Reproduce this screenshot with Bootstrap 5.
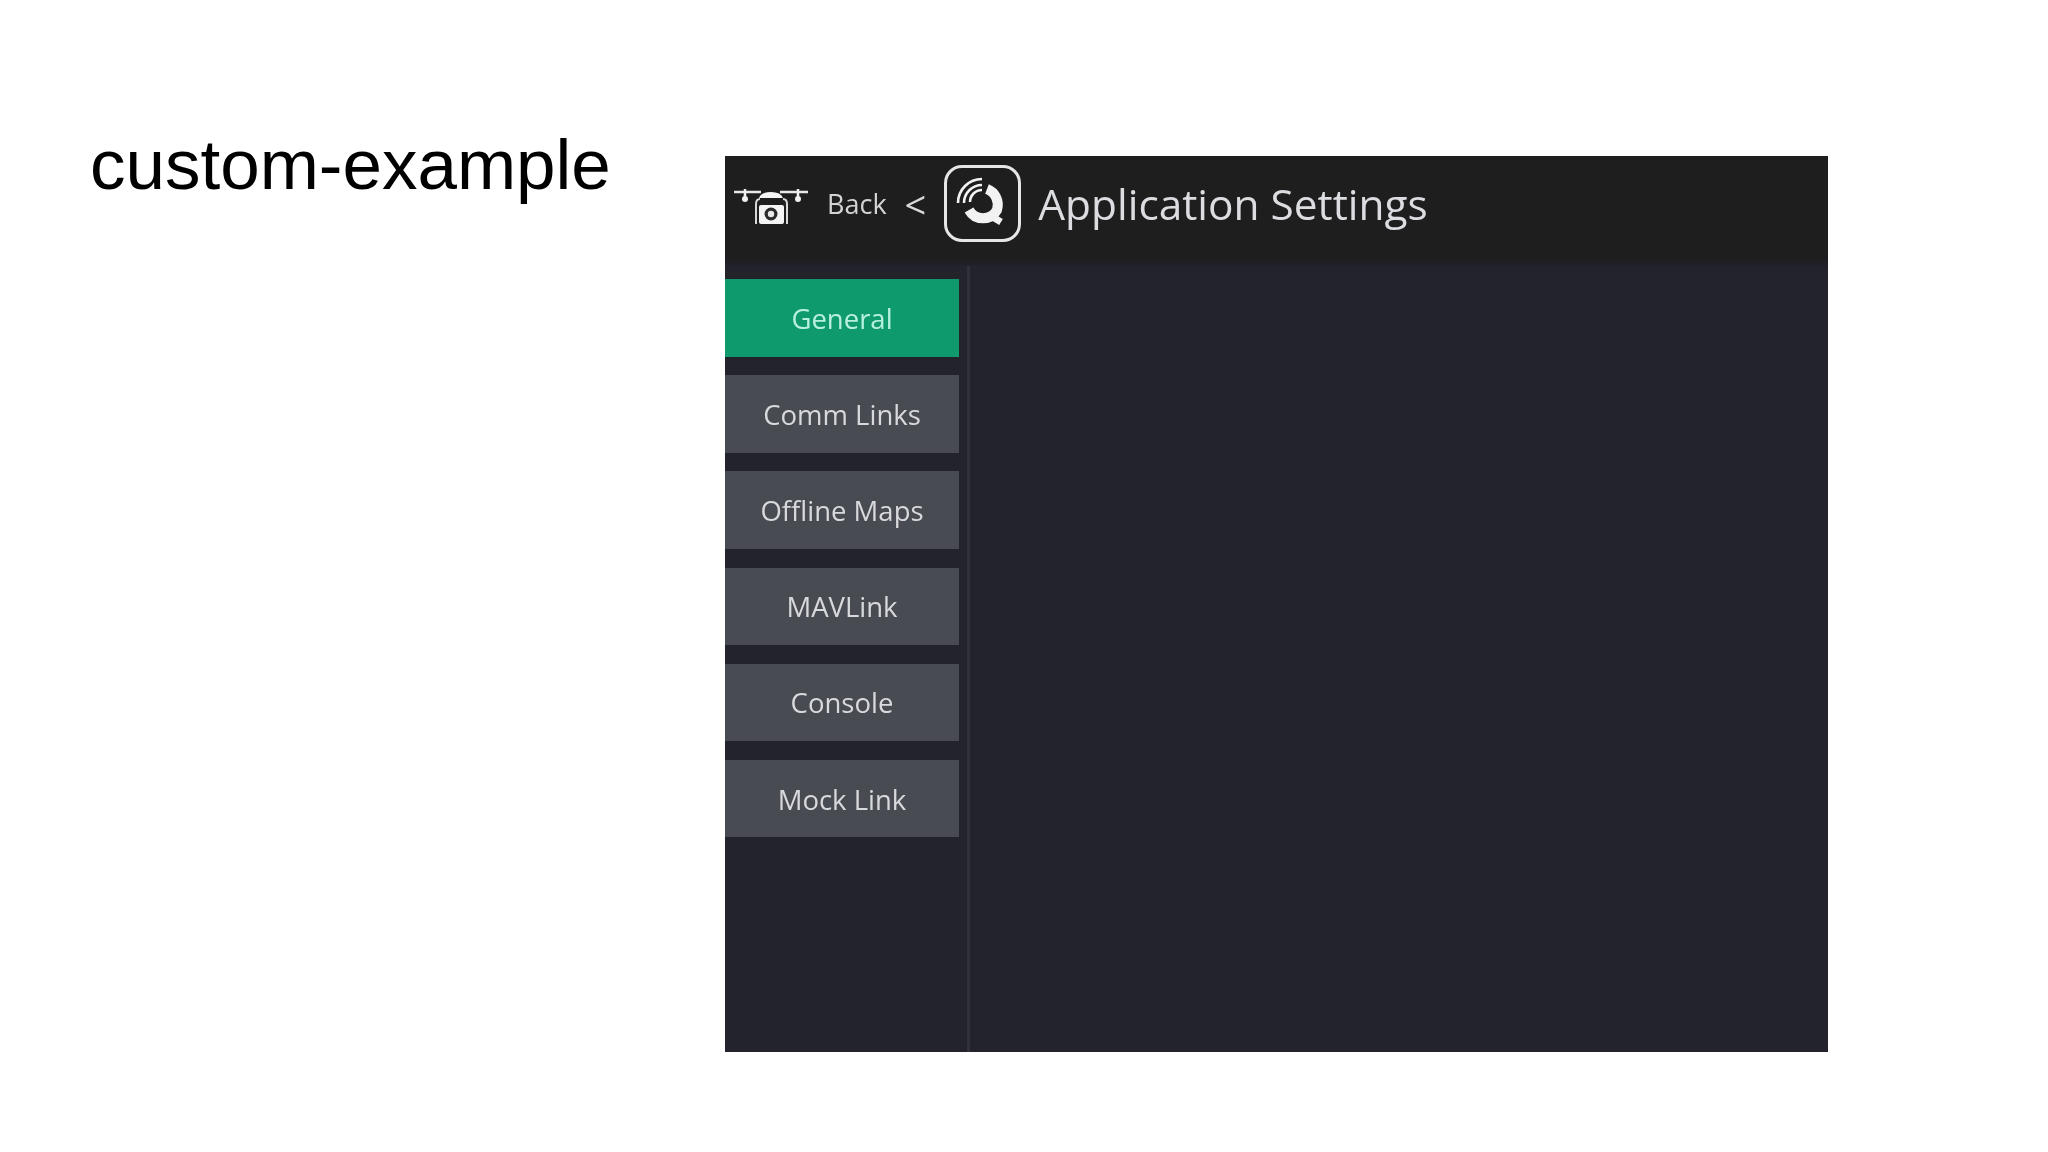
<!DOCTYPE html>
<html lang="en">
<head>
<meta charset="utf-8">
<title>custom-example</title>
<link href="https://cdn.jsdelivr.net/npm/bootstrap@5.3.0/dist/css/bootstrap.min.css" rel="stylesheet">
<style>
body { background:#fff; }
.slide { height:1152px; }
.slide-side { width:725px; padding-left:90px; padding-top:129px; }
.slide-title { font-family:"Liberation Sans",Arial,sans-serif; font-size:71px; line-height:1; color:#000; font-weight:400; margin:0; filter:blur(.4px); }
.app { width:1103px; height:896px; margin-top:156px; background:#22232b; font-family:"Open Sans",sans-serif; }
.app-top { height:110px; background:linear-gradient(#1f1e1f 92%,#20212a); }
.app-top > * { filter:blur(.5px); }
.drone { width:100px; height:60px; margin-top:-14px; }
.back-txt { font-size:27px; color:#d4d4d6; margin-left:2px; margin-top:-13px; }
.lt-txt { font-size:38px; color:#d8d8da; margin-left:18px; margin-top:-14px; line-height:1; }
.qbox { width:77px; height:77px; margin-left:18px; margin-top:-15px; border-radius:18px; box-shadow:inset 0 0 0 3px #e6e6e6; }
.qbox svg { display:block; }
.page-ttl { font-size:42.4px; color:#dcdde0; margin:-13px 0 0 17px; font-weight:400; line-height:1.2; }
.app-side { width:245px; border-right:3px solid #2f3039; padding-top:13px; }
.app-btns { width:234px; gap:18.7px; }
.app-btn { height:77.5px; border:0; border-radius:0; background:#484b52; color:#d8d9dc; font-size:27.5px; padding:1px 0 0; filter:blur(.5px); }
.app-btn.is-on { background:#0f9a6d; color:#b8f0de; }
</style>
</head>
<body>
<div class="slide d-flex">
  <div class="slide-side"><h1 class="slide-title">custom-example</h1></div>
  <div class="app d-flex flex-column">
    <div class="app-top d-flex align-items-center">
      <svg class="drone" viewBox="0 0 100 60" aria-hidden="true">
        <path d="M9 18H36M55 18H83" stroke="#e8e8e8" stroke-width="2.5" fill="none"/>
        <path d="M20 15v9M73 15v9" stroke="#f0f0f0" stroke-width="2.5"/>
        <circle cx="20" cy="25" r="3" fill="#f0f0f0"/><circle cx="73" cy="25" r="3" fill="#f0f0f0"/>
        <path d="M34 24q2-6 12-6t12 6z" fill="#f4f4f4"/>
        <path d="M31 50V30q0-5 4-5M62 50V30q0-5-4-5" stroke="#d8d8d8" stroke-width="2" fill="none"/>
        <rect x="34" y="31" width="25" height="19" rx="2" fill="#f4f4f4"/>
        <circle cx="46" cy="40" r="6.5" fill="#2a2a2a"/><circle cx="46" cy="40" r="3.2" fill="#e8e8e8"/>
      </svg>
      <span class="back-txt">Back</span>
      <span class="lt-txt">&lt;</span>
      <div class="qbox flex-shrink-0">
        <svg width="77" height="77" viewBox="19 9 77 77" aria-hidden="true">
          <g fill="none" stroke="#f2f2f2">
            <path d="M33 47A24 24 0 0 1 57 23" stroke-width="2.6"/>
            <path d="M39 47A18 18 0 0 1 57 29" stroke-width="2.6"/>
            <path d="M45 46A12 12 0 0 1 57 34" stroke-width="2.6"/>
            <path d="M44 54A16 16 0 0 0 72 54A17 17 0 0 0 62 33" stroke-width="10"/>
            <path d="M66 60L76 66" stroke-width="7"/>
          </g>
        </svg>
      </div>
      <h2 class="page-ttl mb-0">Application Settings</h2>
    </div>
    <div class="d-flex flex-grow-1">
      <div class="app-side">
        <div class="app-btns d-flex flex-column">
          <button type="button" class="btn app-btn is-on">General</button>
          <button type="button" class="btn app-btn">Comm Links</button>
          <button type="button" class="btn app-btn">Offline Maps</button>
          <button type="button" class="btn app-btn">MAVLink</button>
          <button type="button" class="btn app-btn">Console</button>
          <button type="button" class="btn app-btn">Mock Link</button>
        </div>
      </div>
      <div class="flex-grow-1"></div>
    </div>
  </div>
</div>
<script src="https://cdn.jsdelivr.net/npm/bootstrap@5.3.0/dist/js/bootstrap.bundle.min.js"></script>
</body>
</html>
